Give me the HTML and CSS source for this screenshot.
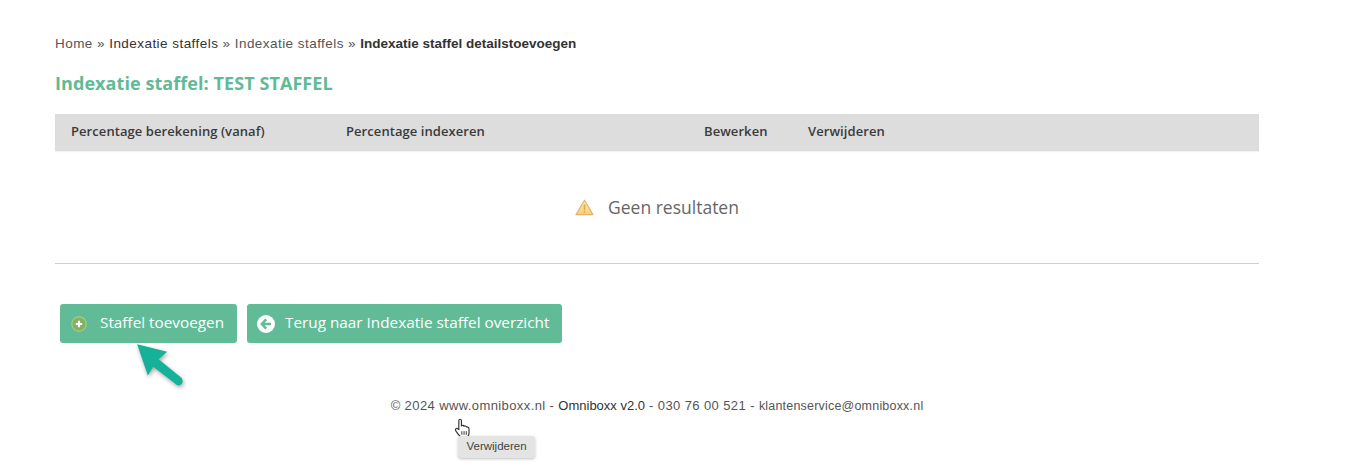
FILE: index.html
```html
<!DOCTYPE html>
<html lang="nl">
<head>
    <meta charset="UTF-8">
    <title>Indexatie staffel</title>
    <link rel="stylesheet" href="styles.css">
</head>
<body>
    <div class="content">
        <div class="breadcrumb">
            <a href="#">Home</a> » <a href="#" class="dark">Indexatie staffels</a> » <a href="#">Indexatie staffels</a> » <span class="current">Indexatie staffel detailstoevoegen</span>
        </div>
        <h1>Indexatie staffel: TEST STAFFEL</h1>
        <div class="table-head">
            <div class="col col-1">Percentage berekening (vanaf)</div>
            <div class="col col-2">Percentage indexeren</div>
            <div class="col col-3">Bewerken</div>
            <div class="col col-4">Verwijderen</div>
        </div>
        <div class="empty">
            <svg class="warn" width="19" height="17" viewBox="0 0 19 17">
                <defs>
                    <linearGradient id="warn-fill" x1="0" y1="0" x2="0" y2="1">
                        <stop offset="0" stop-color="#fdeeb0"/>
                        <stop offset="1" stop-color="#f8cf78"/>
                    </linearGradient>
                </defs>
                <path d="M9.5 1.2 L18 15.6 H1 Z" fill="url(#warn-fill)" stroke="#e6b26c" stroke-width="1.2" stroke-linejoin="round"/>
                <rect x="8.7" y="5.5" width="1.6" height="5.6" fill="#d9a95a"/>
                <rect x="8.7" y="12" width="1.6" height="1.7" fill="#d9a95a"/>
            </svg>
            <span>Geen resultaten</span>
        </div>
        <div class="buttons">
            <a href="#" class="btn">
                <svg class="btn-icon" width="16" height="16" viewBox="0 0 16 16">
                    <circle cx="8" cy="8" r="7.2" fill="#84b162" stroke="#a9cb86" stroke-width="1.2"/>
                    <path d="M8 4.8 V11.2 M4.8 8 H11.2" stroke="#fff" stroke-width="2.2"/>
                </svg>
                Staffel toevoegen
            </a>
            <a href="#" class="btn btn-back">
                <svg class="btn-icon" width="18" height="18" viewBox="0 0 18 18">
                    <circle cx="9" cy="9" r="9" fill="#fff"/>
                    <path d="M9.2 4.4 L4.8 9 L9.2 13.6 M5.2 9 H14" fill="none" stroke="#61bb97" stroke-width="2.4"/>
                </svg>
                Terug naar Indexatie staffel overzicht
            </a>
        </div>
        <div class="footer">© 2024 www.omniboxx.nl - <span class="dark">Omniboxx v2.0</span> - 030 76 00 521 - <span class="small">klantenservice@omniboxx.nl</span></div>
    </div>

    <svg class="arrow" width="60" height="54" viewBox="0 0 56 50">
        <path d="M2 2 L30 9 L22 16 L43 33 C47 37 42 43 38 39 L17 23 L12 31 Z" fill="#15b198"/>
    </svg>
    <svg class="cursor" width="17" height="21" viewBox="0 0 16 20">
        <path d="M4.5 11 V2.5 C4.5 0.8 7 0.8 7 2.5 V7.5 C8 6.8 9 7 9.4 7.8 C10.4 7.2 11.4 7.6 11.7 8.5 C13 8.2 14.2 9 14.2 10.5 V14 C14.2 16.5 13 18.5 10.5 18.5 H8 C6 18.5 5 17.2 3.8 15.4 L1.5 12 C0.6 10.6 2.4 9.3 3.5 10.3 Z" fill="#fff" stroke="#333" stroke-width="1.1" stroke-linejoin="round"/>
        <path d="M7.4 12.5 V16 M9.5 12.5 V16 M11.6 12.5 V16" stroke="#333" stroke-width="0.9"/>
    </svg>
    <div class="tooltip">Verwijderen</div>
</body>
</html>
```

FILE: styles.css
```css
body {
    margin: 0;
    padding: 0;
    background-color: #fff;
    color: #333;
    font-family: "Open Sans", sans-serif;
    overflow: hidden;
}
a {
    color: inherit;
    text-decoration: none;
}
.content {
    width: 1204px;
    margin-left: 55px;
    padding-top: 35px;
}
.breadcrumb {
    font-family: "Liberation Sans", Arial, sans-serif;
    font-size: 13.5px;
    line-height: 17px;
    letter-spacing: 0.45px;
    color: #555;
}
.breadcrumb .dark {
    color: #333;
}
.breadcrumb .current {
    color: #333;
    font-weight: bold;
    letter-spacing: 0;
}
h1 {
    margin: 18px 0 0 0;
    font-size: 18px;
    line-height: 26px;
    font-weight: 700;
    letter-spacing: 0.07px;
    color: #5fba95;
}
.table-head {
    display: flex;
    box-sizing: border-box;
    height: 37px;
    margin-top: 18px;
    padding-bottom: 4px;
    align-items: center;
    background-color: #dddddd;
    box-shadow: 0 1px 1px #f2f2f2;
    font-size: 13px;
    font-weight: 600;
    letter-spacing: 0.07px;
    color: #3a3a3a;
}
.col-1 {
    width: 275px;
    padding-left: 16px;
}
.col-2 {
    width: 358px;
}
.col-3 {
    width: 104px;
}
.empty {
    display: flex;
    height: 112px;
    align-items: center;
    justify-content: center;
    gap: 14px;
    border-bottom: 1px solid #cfcfcf;
    font-size: 17.5px;
    color: #666;
}
.warn {
    flex: none;
}
.buttons {
    display: flex;
    gap: 10px;
    margin: 40px 0 0 5px;
}
.btn {
    display: flex;
    box-sizing: border-box;
    align-items: center;
    height: 39px;
    padding: 0 13px 3px 11px;
    background-color: #61bb97;
    border-radius: 3px;
    font-size: 15.3px;
    color: #fff;
}
.btn-icon {
    margin: 3px 13px 0 0;
}
.btn-back {
    padding-left: 10px;
}
.btn-back .btn-icon {
    margin-right: 10px;
}
.footer {
    margin-top: 54px;
    text-align: center;
    font-family: "Liberation Sans", Arial, sans-serif;
    font-size: 13px;
    line-height: 17px;
    letter-spacing: 0.4px;
    color: #555;
}
.footer .dark {
    color: #333;
    letter-spacing: 0;
}
.footer .small {
    font-size: 12.5px;
    letter-spacing: 0.2px;
}
.arrow {
    position: absolute;
    left: 135px;
    top: 342px;
    filter: drop-shadow(1px 2px 2px rgba(0, 0, 0, 0.35));
}
.cursor {
    position: absolute;
    left: 454px;
    top: 418px;
}
.tooltip {
    position: absolute;
    left: 458px;
    top: 436px;
    width: 77px;
    height: 22px;
    background-color: #e4e4e4;
    border-radius: 3px;
    box-shadow: 0 1px 3px rgba(0, 0, 0, 0.25);
    font-family: "Liberation Sans", Arial, sans-serif;
    font-size: 11.5px;
    line-height: 21px;
    text-align: center;
    color: #444;
}
```
